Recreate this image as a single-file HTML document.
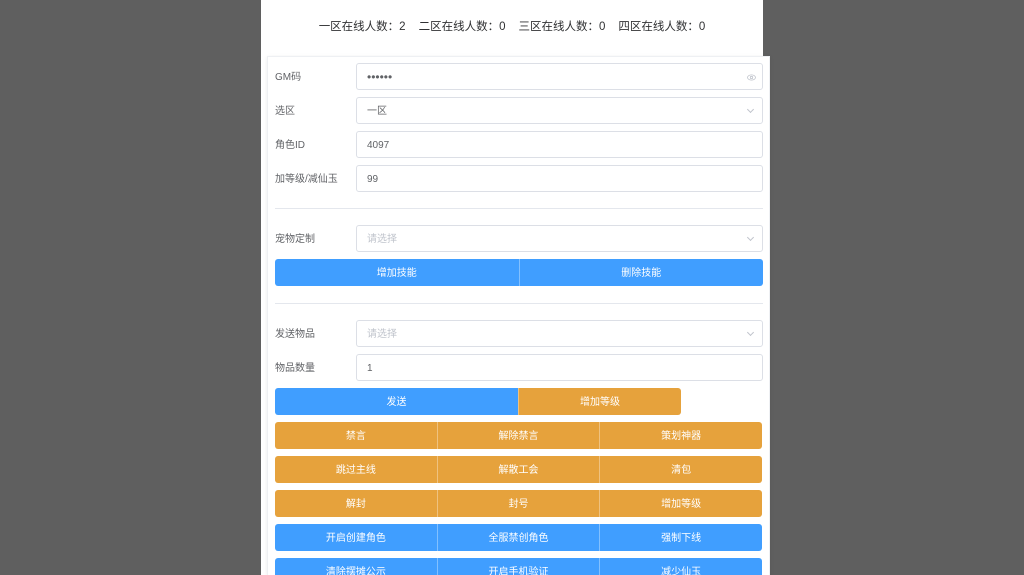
<!DOCTYPE html>
<html><head><meta charset="utf-8"><style>
*{box-sizing:border-box;margin:0;padding:0}
html,body{width:1024px;height:575px;overflow:hidden}
body{background:#5f5f5f;font-family:"Liberation Sans","Noto Sans CJK SC",sans-serif;position:relative}
.panel{position:absolute;left:261px;top:0;width:502px;height:575px;background:#fff}
.head{position:absolute;left:261px;top:18px;width:502px;text-align:center;font-size:11.5px;color:#303133;white-space:nowrap}
.head span{margin:0 6.5px}
.card{position:absolute;left:267px;top:56px;width:503px;height:519px;background:#fff;border:1px solid #eef0f3;border-bottom:none;box-shadow:0 1px 4px rgba(0,0,0,.08)}
.lbl{position:absolute;left:275px;font-size:10px;color:#606266;line-height:29px}
.inp{position:absolute;left:356px;width:407px;height:27px;border:1px solid #dcdfe6;border-radius:3px;font-size:10px;color:#606266;line-height:27px;padding-left:10px}
.ph{color:#c0c4cc}
.arr{position:absolute;right:9px;top:9px;width:5px;height:5px;border-right:1px solid #c0c4cc;border-bottom:1px solid #c0c4cc;transform:rotate(45deg)}
.hr{position:absolute;left:275px;width:488px;height:1px;background:#e4e7ed}
.row{position:absolute;left:275px;height:27px;display:flex;border-radius:3px;overflow:hidden}
.row div{flex:1;color:#fff;font-size:10px;text-align:center;line-height:29px;border-left:1px solid rgba(255,255,255,.35)}
.row div:first-child{border-left:none}
.b{background:#409eff}.o{background:#e6a23c}
</style></head><body>
<div class="panel"></div>
<div class="head"><span>一区在线人数：2</span><span>二区在线人数：0</span><span>三区在线人数：0</span><span>四区在线人数：0</span></div>
<div class="card"></div>
<div class="lbl" style="top:63px">GM码</div><div class="inp" style="top:63px;font-size:12px">••••••<svg style="position:absolute;right:6px;top:10px" width="9" height="7" viewBox="0 0 9 7"><ellipse cx="4.5" cy="3.5" rx="4" ry="2.6" fill="none" stroke="#c0c4cc" stroke-width=".8"/><circle cx="4.5" cy="3.5" r="1.2" fill="none" stroke="#c0c4cc" stroke-width=".8"/></svg></div>
<div class="lbl" style="top:97px">选区</div><div class="inp" style="top:97px">一区<i class="arr"></i></div>
<div class="lbl" style="top:131px">角色ID</div><div class="inp" style="top:131px">4097</div>
<div class="lbl" style="top:165px">加等级/减仙玉</div><div class="inp" style="top:165px">99</div>
<div class="hr" style="top:208px"></div>
<div class="lbl" style="top:225px">宠物定制</div><div class="inp ph" style="top:225px">请选择<i class="arr"></i></div>
<div class="row" style="top:259px;width:488px"><div class="b">增加技能</div><div class="b">删除技能</div></div>
<div class="hr" style="top:303px"></div>
<div class="lbl" style="top:320px">发送物品</div><div class="inp ph" style="top:320px">请选择<i class="arr"></i></div>
<div class="lbl" style="top:354px">物品数量</div><div class="inp" style="top:354px">1</div>
<div class="row" style="top:388px;width:406px"><div class="b" style="flex:0 0 243px">发送</div><div class="o">增加等级</div></div>
<div class="row" style="top:422px;width:487px"><div class="o">禁言</div><div class="o">解除禁言</div><div class="o">策划神器</div></div>
<div class="row" style="top:456px;width:487px"><div class="o">跳过主线</div><div class="o">解散工会</div><div class="o">清包</div></div>
<div class="row" style="top:490px;width:487px"><div class="o">解封</div><div class="o">封号</div><div class="o">增加等级</div></div>
<div class="row" style="top:524px;width:487px"><div class="b">开启创建角色</div><div class="b">全服禁创角色</div><div class="b">强制下线</div></div>
<div class="row" style="top:558px;width:487px"><div class="b">清除摆摊公示</div><div class="b">开启手机验证</div><div class="b">减少仙玉</div></div>
</body></html>
